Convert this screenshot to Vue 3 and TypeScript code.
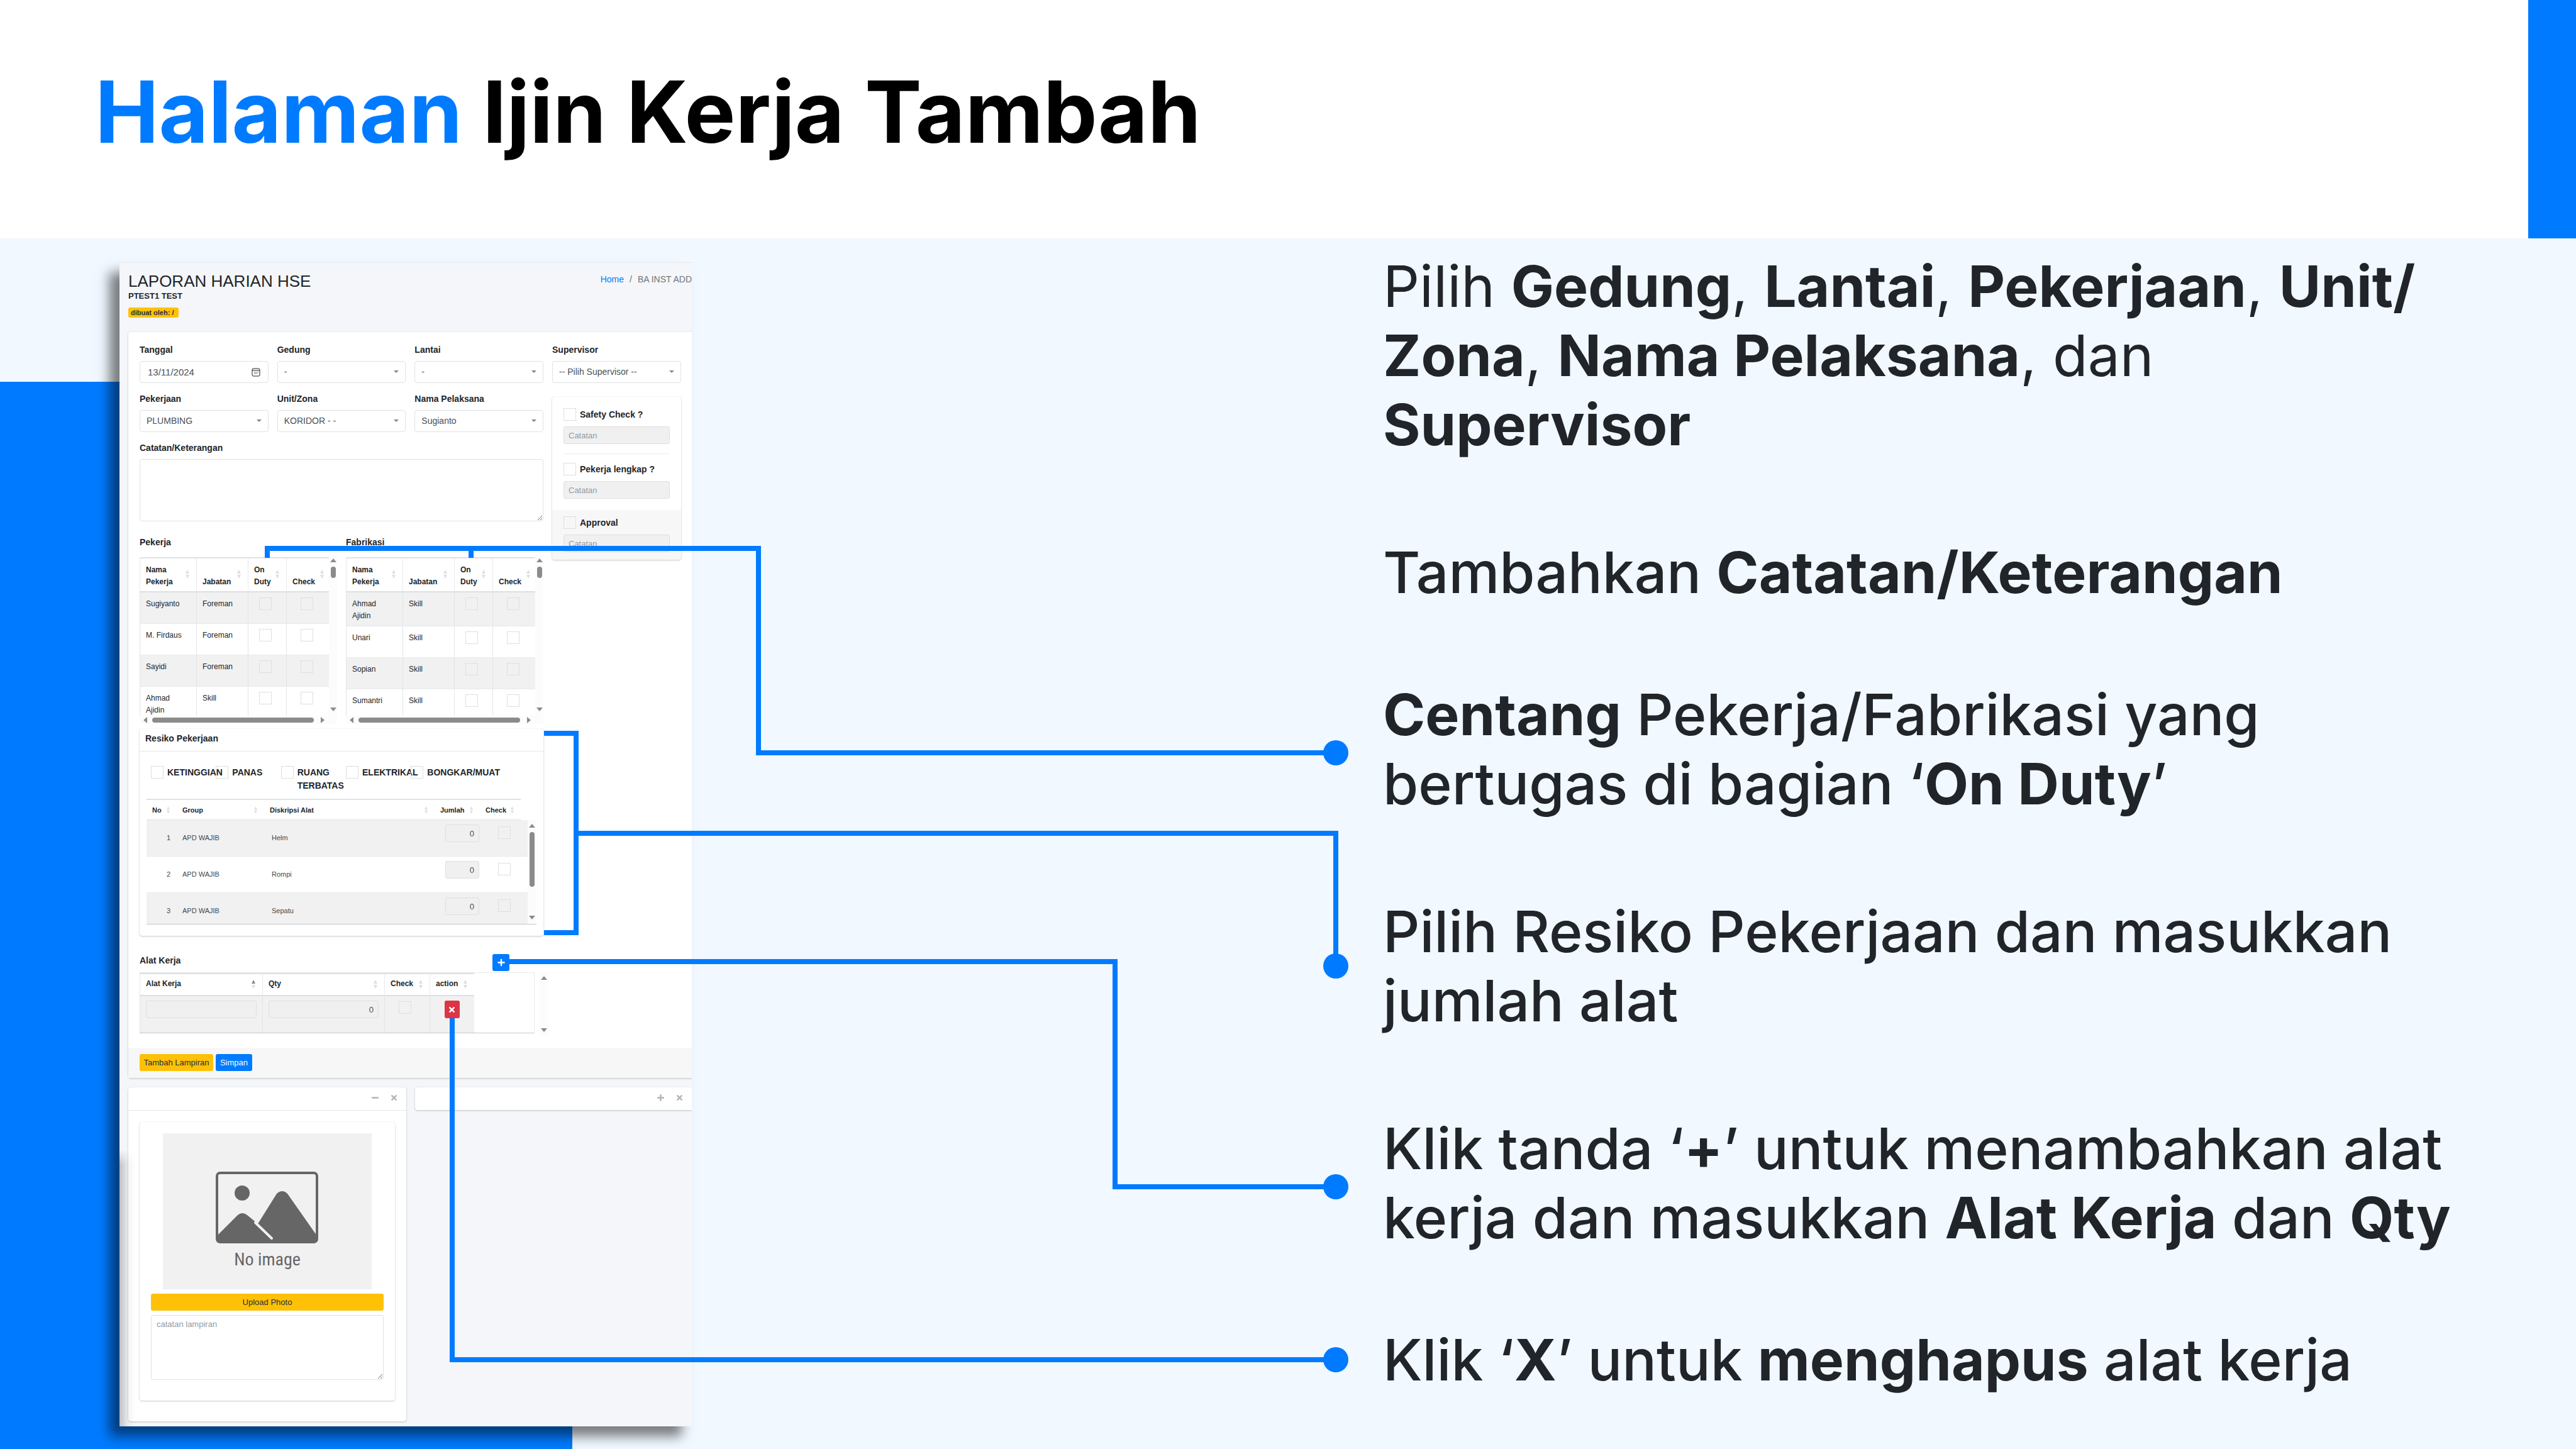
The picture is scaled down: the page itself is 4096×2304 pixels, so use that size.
<script setup lang="ts">
interface Worker { name: string; role: string; tall?: boolean }
interface Option { id: string; label: string; value: string }
interface Tool { no: number; group: string; name: string }

const optionsTop: Option[] = [
  { id: 'gedung', label: 'Gedung', value: '-' },
  { id: 'lantai', label: 'Lantai', value: '-' },
  { id: 'pekerjaan', label: 'Pekerjaan', value: 'PLUMBING' },
  { id: 'unit', label: 'Unit/Zona', value: 'KORIDOR - -' },
  { id: 'pelaksana', label: 'Nama Pelaksana', value: 'Sugianto' },
]

const crews: { id: string; title: string; rows: Worker[] }[] = [
  {
    id: 'pekerja',
    title: 'Pekerja',
    rows: [
      { name: 'Sugiyanto', role: 'Foreman' },
      { name: 'M. Firdaus', role: 'Foreman' },
      { name: 'Sayidi', role: 'Foreman' },
      { name: 'Ahmad Ajidin', role: 'Skill' },
    ],
  },
  {
    id: 'fabrikasi',
    title: 'Fabrikasi',
    rows: [
      { name: 'Ahmad Ajidin', role: 'Skill', tall: true },
      { name: 'Unari', role: 'Skill' },
      { name: 'Sopian', role: 'Skill' },
      { name: 'Sumantri', role: 'Skill' },
    ],
  },
]

const risks: string[] = ['KETINGGIAN', 'PANAS', 'RUANG TERBATAS', 'ELEKTRIKAL', 'BONGKAR/MUAT']

const tools: Tool[] = [
  { no: 1, group: 'APD WAJIB', name: 'Helm' },
  { no: 2, group: 'APD WAJIB', name: 'Rompi' },
  { no: 3, group: 'APD WAJIB', name: 'Sepatu' },
]

const sortUp = 'M3 0L6 6H0Z'
const sortDown = 'M0 8H6L3 14Z'
const timesPath = 'M242.72 256l100.07-100.07c12.28-12.28 12.28-32.19 0-44.48l-22.24-22.24c-12.28-12.28-32.19-12.28-44.48 0L176 189.28 75.93 89.21c-12.28-12.28-32.19-12.28-44.48 0L9.21 111.45c-12.28 12.28-12.28 32.19 0 44.48L109.28 256 9.21 356.07c-12.28 12.28-12.28 32.19 0 44.48l22.24 22.24c12.28 12.28 32.2 12.28 44.48 0L176 322.72l100.07 100.07c12.28 12.28 32.2 12.28 44.48 0l22.24-22.24c12.28-12.28 12.28-32.19 0-44.48L242.72 256z'
const plusPath = 'M416 208H272V64c0-17.67-14.33-32-32-32h-32c-17.67 0-32 14.33-32 32v144H32c-17.67 0-32 14.33-32 32v32c0 17.67 14.33 32 32 32h144v144c0 17.67 14.33 32 32 32h32c17.67 0 32-14.33 32-32V304h144c17.67 0 32-14.33 32-32v-32c0-17.67-14.33-32-32-32z'
const minusPath = 'M416 208H32c-17.67 0-32 14.33-32 32v32c0 17.67 14.33 32 32 32h384c17.67 0 32-14.33 32-32v-32c0-17.67-14.33-32-32-32z'
</script>

<template>
  <div class="slide">
    <header class="slide-head">
      <h1 class="slide-title"><span class="accent">Halaman</span> Ijin Kerja Tambah</h1>
      <div class="corner-bar"></div>
    </header>

    <main class="slide-body">
      <section class="shot">
        <div class="page">
          <div class="page-head">
            <div>
              <h2 class="page-title">LAPORAN HARIAN HSE</h2>
              <p class="page-sub">PTEST1 TEST</p>
              <span class="badge">dibuat oleh: /</span>
            </div>
            <nav class="crumbs"><a href="#">Home</a><span>/</span><span>BA INST ADD</span></nav>
          </div>

          <div class="card form-card">
            <div class="form-cols">
              <div class="form-main">
                <div class="fields">
                  <div class="field">
                    <label for="tanggal">Tanggal</label>
                    <div class="control">
                      <input id="tanggal" class="input date" type="text" value="13/11/2024">
                      <svg class="calendar" viewBox="0 0 14 14" width="14" height="14">
                        <rect x="1" y="1" width="12" height="12" rx="2" fill="none" stroke="#222" />
                        <path d="M1 4H13" stroke="#222" />
                        <path d="M6 7H7M8 7H9M10 7H11M4 9H5M6 9H7M8 9H9M4 7H5" stroke="#222" />
                      </svg>
                    </div>
                  </div>
                  <div v-for="o in optionsTop" :key="o.id" class="field">
                    <label :for="o.id">{{ o.label }}</label>
                    <div class="control caret">
                      <select :id="o.id" class="input"><option>{{ o.value }}</option></select>
                    </div>
                  </div>
                </div>
                <div class="field note">
                  <label for="catatan">Catatan/Keterangan</label>
                  <textarea id="catatan" class="input"></textarea>
                </div>

                <div class="crews">
                  <section v-for="c in crews" :key="c.id" class="crew">
                    <h3 class="label">{{ c.title }}</h3>
                    <div class="scroll-grid">
                      <div class="viewport">
                        <table class="grid crew-table">
                          <colgroup><col class="c90"><col class="c82"><col class="c61"><col class="c71"></colgroup>
                          <thead>
                            <tr>
                              <th v-for="h in ['Nama Pekerja', 'Jabatan', 'On Duty', 'Check']" :key="h">
                                <div class="th"><span>{{ h }}</span><svg class="sort" viewBox="0 0 6 14"><path :d="sortUp" /><path :d="sortDown" /></svg></div>
                              </th>
                            </tr>
                          </thead>
                          <tbody>
                            <tr v-for="w in c.rows" :key="w.name" :class="{ tall: w.tall }">
                              <td>{{ w.name }}</td>
                              <td>{{ w.role }}</td>
                              <td class="tick"><input type="checkbox" :aria-label="'On Duty ' + w.name"></td>
                              <td class="tick"><input type="checkbox" :aria-label="'Check ' + w.name"></td>
                            </tr>
                          </tbody>
                        </table>
                      </div>
                      <div class="vbar"><i class="up"></i><i class="thumb short"></i><i class="down"></i></div>
                      <div class="hbar"><i class="left"></i><i class="thumb"></i><i class="right"></i></div>
                    </div>
                  </section>
                </div>

                <section class="card risk">
                  <h3 class="label risk-title">Resiko Pekerjaan</h3>
                  <div class="risk-checks">
                    <label v-for="r in risks" :key="r"><input type="checkbox"><span>{{ r }}</span></label>
                  </div>
                  <div class="risk-table">
                    <table class="plain head">
                      <colgroup><col class="c48"><col class="c139"><col class="c271"><col class="c72"><col class="c65"></colgroup>
                      <thead>
                        <tr>
                          <th v-for="h in ['No', 'Group', 'Diskripsi Alat', 'Jumlah', 'Check']" :key="h">
                            <div class="th"><span>{{ h }}</span><svg class="sort" viewBox="0 0 6 14"><path :d="sortUp" /><path :d="sortDown" /></svg></div>
                          </th>
                        </tr>
                      </thead>
                    </table>
                    <div class="risk-scroll">
                      <div class="risk-view">
                        <table class="plain body">
                          <colgroup><col class="c48"><col class="c142"><col class="c277"><col class="c71"><col class="c68"></colgroup>
                          <tbody>
                            <tr v-for="t in tools" :key="t.no">
                              <td class="num">{{ t.no }}</td>
                              <td>{{ t.group }}</td>
                              <td>{{ t.name }}</td>
                              <td class="amount"><input class="input small" type="text" value="0" disabled :aria-label="'Jumlah ' + t.name"></td>
                              <td class="tick"><input type="checkbox" :aria-label="'Check ' + t.name"></td>
                            </tr>
                          </tbody>
                        </table>
                      </div>
                      <div class="vbar"><i class="up"></i><i class="thumb long"></i><i class="down"></i></div>
                    </div>
                  </div>
                </section>

                <section class="gear">
                  <div class="gear-head">
                    <h3 class="label">Alat Kerja</h3>
                    <button class="btn blue square" type="button" aria-label="Tambah alat kerja">
                      <svg viewBox="0 0 448 512" width="12" height="13"><path :d="plusPath" fill="currentColor" /></svg>
                    </button>
                  </div>
                  <div class="gear-row">
                    <div class="gear-view">
                      <table class="grid gear-table">
                        <colgroup><col class="c195"><col class="c194"><col class="c72"><col class="c71"></colgroup>
                        <thead>
                          <tr>
                            <th v-for="(h, i) in ['Alat Kerja', 'Qty', 'Check', 'action']" :key="h">
                              <div class="th"><span>{{ h }}</span><svg class="sort" viewBox="0 0 6 14"><path :class="{ on: i === 0 }" :d="sortUp" /><path :d="sortDown" /></svg></div>
                            </th>
                          </tr>
                        </thead>
                        <tbody>
                          <tr>
                            <td><input class="input small" type="text" disabled aria-label="Alat Kerja"></td>
                            <td><input class="input small" type="text" value="0" disabled aria-label="Qty"></td>
                            <td class="tick"><input type="checkbox" aria-label="Check alat"></td>
                            <td class="act">
                              <button class="btn red" type="button" aria-label="Hapus alat kerja">
                                <svg viewBox="0 0 352 512" width="9" height="13"><path :d="timesPath" fill="currentColor" /></svg>
                              </button>
                            </td>
                          </tr>
                        </tbody>
                      </table>
                    </div>
                    <div class="vbar"><i class="up"></i><i class="down"></i></div>
                  </div>
                </section>
              </div>

              <aside class="form-side">
                <div class="field">
                  <label for="supervisor">Supervisor</label>
                  <div class="control caret">
                    <select id="supervisor" class="input"><option>-- Pilih Supervisor --</option></select>
                  </div>
                </div>
                <div class="card checks">
                  <div class="check-item">
                    <label><input type="checkbox"><span>Safety Check ?</span></label>
                    <input class="input small hint" type="text" placeholder="Catatan" disabled aria-label="Catatan safety">
                  </div>
                  <div class="check-item second">
                    <label><input type="checkbox"><span>Pekerja lengkap ?</span></label>
                    <input class="input small hint" type="text" placeholder="Catatan" disabled aria-label="Catatan pekerja">
                  </div>
                  <div class="check-item approval">
                    <label><input type="checkbox"><span>Approval</span></label>
                    <input class="input small hint" type="text" placeholder="Catatan" disabled aria-label="Catatan approval">
                  </div>
                </div>
              </aside>
            </div>
            <footer class="form-foot">
              <button class="btn amber" type="button">Tambah Lampiran</button>
              <button class="btn blue" type="button">Simpan</button>
            </footer>
          </div>

          <div class="attachments">
            <section class="card attach">
              <div class="attach-head">
                <button class="tool" type="button" aria-label="Ciutkan"><svg viewBox="0 0 448 512" width="11" height="13"><path :d="minusPath" fill="currentColor" /></svg></button>
                <button class="tool" type="button" aria-label="Tutup"><svg viewBox="0 0 352 512" width="9" height="13"><path :d="timesPath" fill="currentColor" /></svg></button>
              </div>
              <div class="card photo">
                <svg class="no-image" viewBox="0 0 332 248" width="332" height="248">
                  <rect width="332" height="248" fill="#f1f1f1" />
                  <rect x="86" y="63" width="159" height="110" rx="5" fill="none" stroke="#666" stroke-width="4" />
                  <circle cx="126" cy="95" r="12" fill="#666" />
                  <path d="M87 162L119 130Q126 124 134 130L151 144L181 96Q190 88 198 96L245 163V168Q245 173 240 173H91Q86 173 86 168Z" fill="#666" />
                  <path d="M147 142L173 167" stroke="#f1f1f1" stroke-width="4" stroke-linecap="round" />
                  <text x="166" y="210" text-anchor="middle" class="no-image-text">No image</text>
                </svg>
                <button class="btn amber wide" type="button">Upload Photo</button>
                <textarea class="input" placeholder="catatan lampiran" aria-label="catatan lampiran"></textarea>
              </div>
            </section>
            <section class="card attach closed">
              <div class="attach-head">
                <button class="tool" type="button" aria-label="Bentangkan"><svg viewBox="0 0 448 512" width="11" height="13"><path :d="plusPath" fill="currentColor" /></svg></button>
                <button class="tool" type="button" aria-label="Tutup"><svg viewBox="0 0 352 512" width="9" height="13"><path :d="timesPath" fill="currentColor" /></svg></button>
              </div>
            </section>
          </div>
        </div>
      </section>

      <section class="steps">
        <p class="light">Pilih <b>Gedung</b>, <b>Lantai</b>, <b>Pekerjaan</b>, <b>Unit/<br>Zona</b>, <b>Nama Pelaksana</b>, dan<br><b>Supervisor</b></p>
        <p>Tambahkan <b>Catatan/Keterangan</b></p>
        <p class="near"><b>Centang</b> Pekerja/Fabrikasi yang<br>bertugas di bagian ‘<b>On Duty</b>’</p>
        <p>Pilih Resiko Pekerjaan dan masukkan<br>jumlah alat</p>
        <p>Klik tanda ‘<b>+</b>’ untuk menambahkan alat<br>kerja dan masukkan <b>Alat Kerja</b> dan <b>Qty</b></p>
        <p class="near">Klik ‘<b>X</b>’ untuk <b>menghapus</b> alat kerja</p>
      </section>
    </main>

    <svg class="links" viewBox="0 0 4096 2304" preserveAspectRatio="xMinYMin meet">
      <g fill="none" stroke="#007bff" stroke-width="8">
        <path d="M425 887V872H1206V1197H2124" />
        <path d="M749 872V887" />
        <path d="M865 1166H916V1483H865" />
        <path d="M916 1325H2124V1536" />
        <path d="M810 1529H1773V1887H2124" />
        <path d="M719 1619V2162H2124" />
      </g>
      <g fill="#007bff">
        <circle cx="2124" cy="1197" r="20" />
        <circle cx="2124" cy="1536" r="20" />
        <circle cx="2124" cy="1887" r="20" />
        <circle cx="2124" cy="2162" r="20" />
      </g>
    </svg>
  </div>
</template>

<style>
body { margin: 0; }
</style>

<style scoped>
* { box-sizing: border-box; }
h1, h2, h3, p { margin: 0; font-weight: inherit; font-size: inherit; }

.slide {
  position: relative;
  min-height: 100vh;
  display: flex;
  flex-direction: column;
  background: #f1f8ff;
  font-family: Inter, sans-serif;
  overflow: hidden;
}
.slide-head {
  display: flex;
  justify-content: space-between;
  height: 379px;
  background: #fff;
}
.slide-title {
  padding: 95px 0 0 151px;
  font-size: 136px;
  line-height: 166px;
  font-weight: 700;
  color: #000;
}
.accent { color: #007bff; }
.corner-bar { width: 76px; background: #007bff; }
.slide-body {
  position: relative;
  flex: 1;
  display: grid;
  grid-template-columns: 190fr 910fr 1096fr 1900fr;
}
.slide-body::before {
  content: "";
  position: absolute;
  left: 0;
  top: 228px;
  bottom: 0;
  width: 22.22%;
  background: #007bff;
}
.links {
  position: absolute;
  left: 0;
  top: 0;
  width: 100%;
  height: 100%;
  pointer-events: none;
}

/* Instruction column */
.steps {
  grid-column: 4;
  padding: 21px 0 0 3px;
  font-size: 91px;
  line-height: 110px;
  font-weight: 450;
  color: #212529;
  white-space: nowrap;
}
.steps .light { font-weight: 400; }
.steps p + p { margin-top: 125px; }
.steps p.near { margin-top: 116px; }
.steps b { font-weight: 700; }

/* Application page */
.shot {
  grid-column: 2;
  position: relative;
  align-self: start;
  margin-top: 38px;
  min-width: 0;
  box-shadow: -16px 16px 18px rgba(0, 0, 0, .5);
}
.shot::after {
  content: "";
  position: absolute;
  left: 0;
  bottom: 0;
  width: 26px;
  height: 440px;
  background: linear-gradient(to right, rgba(0, 0, 0, .22), rgba(0, 0, 0, .05) 50%, transparent);
  mask-image: linear-gradient(to bottom, transparent, #000 24px);
  pointer-events: none;
}
.page {
  overflow: hidden;
  padding: 0 0 8px 14px;
  border-top: 1px solid #e3e9f0;
  background: #f4f6f9;
  font-family: "Liberation Sans", Arial, sans-serif;
  font-size: 14px;
  line-height: 21px;
  color: #212529;
}
.page-head {
  display: flex;
  justify-content: space-between;
  height: 110px;
  padding-top: 13px;
}
.page-title { font-size: 26px; line-height: 32px; }
.page-sub { font-size: 13px; line-height: 16px; font-weight: 700; }
.badge {
  display: block;
  width: 80px;
  margin-top: 10px;
  padding-left: 4px;
  border-radius: 3px;
  background: #ffc107;
  font-size: 11px;
  line-height: 16px;
  font-weight: 700;
  color: #1f2d3d;
  white-space: nowrap;
}
.crumbs { display: flex; gap: 9px; padding-top: 3px; color: #6c757d; white-space: nowrap; }
.crumbs a { color: #007bff; text-decoration: none; }

.card {
  background: #fff;
  border-radius: 4px;
  box-shadow: 0 0 1px rgba(0, 0, 0, .15), 0 1px 3px rgba(0, 0, 0, .2);
}
.form-card { border-radius: 4px 0 0 4px; }
.form-cols {
  display: grid;
  grid-template-columns: 642fr 205fr;
  gap: 14px;
  padding: 18px 17px 18px 18px;
}
.form-main, .form-side { min-width: 0; }
.label, .field label, .check-item label, .risk-checks label { font-weight: 700; }
.label { line-height: 21px; }
.fields {
  display: grid;
  grid-template-columns: repeat(3, 1fr);
  gap: 15px 14px;
}
.field label { display: block; margin-bottom: 7px; }
.field.note { margin-top: 15px; }
.control { position: relative; }
.input {
  display: block;
  width: 100%;
  height: 35px;
  margin: 0;
  padding: 0 10px;
  border: 1px solid #dee2e6;
  border-radius: 4px;
  background: #fff;
  font: inherit;
  color: #495057;
  appearance: none;
  outline: none;
}
.input.date { padding-left: 12px; font-size: 15px; }
.calendar { position: absolute; right: 13px; top: 11px; }
.caret::after {
  content: "";
  position: absolute;
  right: 11px;
  top: 15px;
  border: 4px solid transparent;
  border-top-color: #888;
  border-bottom: 0;
}
textarea.input { height: 99px; resize: vertical; }
.input.small {
  height: 28px;
  padding: 0 7px;
  border-radius: 3px;
  border-color: #dedfe0;
  background: #f0f0f0;
  font-size: 13px;
  text-align: right;
}
.input.hint { text-align: left; }
.input::placeholder { color: #939ba2; opacity: 1; }

input[type="checkbox"] {
  flex: none;
  width: 20px;
  height: 20px;
  margin: 0;
  border: 1px solid #dfdfdc;
  background: transparent;
  appearance: none;
}

/* Scrollable grids */
.crews { display: grid; grid-template-columns: 1fr 1fr; gap: 14px; margin-top: 23px; }
.crew { min-width: 0; }
.scroll-grid {
  display: grid;
  grid-template-columns: 1fr 13px;
  grid-template-rows: 256px 13px;
  margin-top: 9px;
  background: #fcfcfc;
}
.viewport { overflow: hidden; padding-top: 4px; background: #fff; min-width: 0; }
table { table-layout: fixed; border-collapse: separate; border-spacing: 0; }
th, td { text-align: left; padding: 0; }
.c48 { width: 48px; }
.c61 { width: 61px; }
.c65 { width: 65px; }
.c68 { width: 68px; }
.c71 { width: 71px; }
.c72 { width: 72px; }
.c82 { width: 82px; }
.c90 { width: 90px; }
.c139 { width: 139px; }
.c142 { width: 142px; }
.c194 { width: 194px; }
.c195 { width: 195px; }
.c271 { width: 271px; }
.c277 { width: 277px; }
.grid { font-size: 12px; line-height: 19px; }
.crew-table { width: 304px; }
.gear-table { width: 532px; }
.grid th {
  height: 56px;
  padding: 0 11px 5px 9px;
  vertical-align: bottom;
  border-left: 1px solid #e6e9ec;
  border-top: 2px solid #dee2e6;
  border-bottom: 2px solid #dbe0e5;
}
.th { display: flex; justify-content: space-between; align-items: flex-end; }
.sort { flex: none; width: 6px; height: 14px; fill: #dedede; }
.sort .on { fill: #888; }
.crew-table .sort { margin-bottom: 15px; }
.grid td {
  height: 50px;
  padding: 9px 14px 0 9px;
  vertical-align: top;
  border-left: 1px solid #e1e4e8;
  border-bottom: 1px solid #e6e9ec;
}
.grid .tall td { height: 54px; }
tbody tr:nth-child(odd) td { background: #f1f1f1; }
.grid td.tick { padding: 8px 16px 0 9px; }
.tick input { margin: 0 auto; display: block; }

.vbar, .hbar { display: flex; align-items: center; background: #fcfcfc; }
.vbar { flex-direction: column; padding: 6px 0 7px; }
.hbar { padding: 0 7px 0 6px; }
.thumb { background: #8b8b8b; border-radius: 4px; }
.vbar .thumb { width: 8px; margin-top: 7px; }
.vbar .short { height: 18px; }
.vbar .long { height: 87px; }
.hbar .thumb { height: 8px; flex: 1; margin: 0 11px 0 8px; }
.up, .down { border: 5px solid transparent; }
.up { border-bottom: 6px solid #8b8b8b; border-top: 0; }
.down { border-top: 6px solid #8b8b8b; border-bottom: 0; margin-top: auto; }
.left, .right { border: 5px solid transparent; }
.left { border-right: 6px solid #8b8b8b; border-left: 0; }
.right { border-left: 6px solid #8b8b8b; border-right: 0; }

/* Risk card */
.risk { margin-top: 8px; padding-bottom: 18px; }
.risk-title { padding: 5px 9px 9px; border-bottom: 1px solid #e6e8ea; }
.risk-checks {
  display: grid;
  grid-template-columns: repeat(6, minmax(0, 1fr));
  padding: 23px 4px 0 18px;
  height: 75px;
}
.risk-checks label { display: flex; gap: 6px; }
.risk-checks span { min-width: 0; }
.risk-table { padding: 0 11px; }
.plain { font-size: 11px; line-height: 16px; }
.plain.head { width: 595px; }
.plain.body { width: 100%; color: #43484d; }
.plain th {
  height: 34px;
  padding: 0 11px 0 9px;
  border-top: 2px solid #dee2e6;
  border-bottom: 1px solid #dee2e6;
}
.plain .th { align-items: center; }
.plain .sort { width: 5px; height: 12px; }
.plain td { height: 58px; padding: 0 8px 2px 9px; border-bottom: 1px solid #e8e8e8; }
.plain td.num { text-align: right; padding-right: 10px; }
.plain td.amount { vertical-align: top; padding: 7px 9px 0 8px; }
.plain td.tick { vertical-align: top; padding: 10px 14px 0 8px; }
.risk-scroll { display: flex; height: 166px; border-bottom: 1px solid #c6c8ca; }
.risk-view { flex: 1; overflow: hidden; }
.risk-scroll .vbar { width: 14px; }

/* Work tools */
.gear { margin-top: 29px; }
.gear-head { display: flex; justify-content: space-between; padding-right: 54px; }
.gear-row { display: flex; gap: 8px; margin: 2px -7px 0 0; }
.gear-row .vbar { width: 13px; }
.gear-view {
  flex: 1;
  height: 97px;
  margin-bottom: 5px;
  overflow: hidden;
  border-top: 1px solid #e6e9ec;
  border-right: 1px solid #e6e9ec;
  border-bottom: 1px solid #c6c8ca;
}
.gear-table th { height: 37px; padding-bottom: 8px; }
.gear-table .th { align-items: center; }
.gear-table td { height: 60px; padding: 7px 9px 0; }
.gear-table td.act { padding-right: 10px; text-align: center; }

.btn {
  display: inline-flex;
  align-items: center;
  justify-content: center;
  height: 27px;
  padding: 0;
  border: 0;
  border-radius: 3px;
  font: inherit;
  font-size: 13px;
}
.btn.blue { background: #007bff; color: #fff; width: 58px; }
.btn.square { width: 27px; }
.btn.amber { background: #ffc107; color: #1f2d3d; width: 117px; }
.btn.red { width: 24px; height: 28px; background: #dc3545; color: #fff; }
.btn.wide { width: 100%; margin: 7px 0; }

/* Side checks */
.checks { margin-top: 22px; overflow: hidden; }
.check-item { margin: 0 18px; padding-top: 18px; }
.check-item label { display: flex; gap: 6px; height: 20px; line-height: 20px; margin-bottom: 9px; }
.check-item.second { margin-top: 15px; padding: 14px 0 18px; border-top: 1px solid #ececec; }
.check-item.approval { margin: 0; padding: 10px 18px 12px; background: #f7f7f7; }

.form-foot {
  display: flex;
  gap: 4px;
  padding: 10px 18px 11px;
  background: #f7f7f7;
}

/* Attachments */
.attachments {
  display: grid;
  grid-template-columns: 442fr 440fr;
  gap: 14px;
  align-items: start;
  margin-top: 15px;
}
.attach { padding-bottom: 33px; }
.attach.closed { padding: 0; border-radius: 4px 0 0 4px; }
.attach-head {
  display: flex;
  justify-content: flex-end;
  align-items: center;
  gap: 20px;
  height: 36px;
  padding: 0 15px 4px 0;
}
.attach:not(.closed) .attach-head { height: 37px; border-bottom: 1px solid #e8e8e8; }
.tool { display: flex; padding: 0; border: 0; background: none; color: #adb5bd; }
.photo { margin: 18px 18px 0; padding: 18px 18px 33px; }
.no-image { display: block; margin: 0 auto; max-width: 100%; }
.no-image-text { font-family: "Liberation Sans Narrow", "Roboto Condensed", "Liberation Sans", sans-serif; font-size: 28px; fill: #666; }
.photo textarea.input { height: 103px; padding: 3px 8px; font-size: 13px; border-radius: 3px; }
</style>
